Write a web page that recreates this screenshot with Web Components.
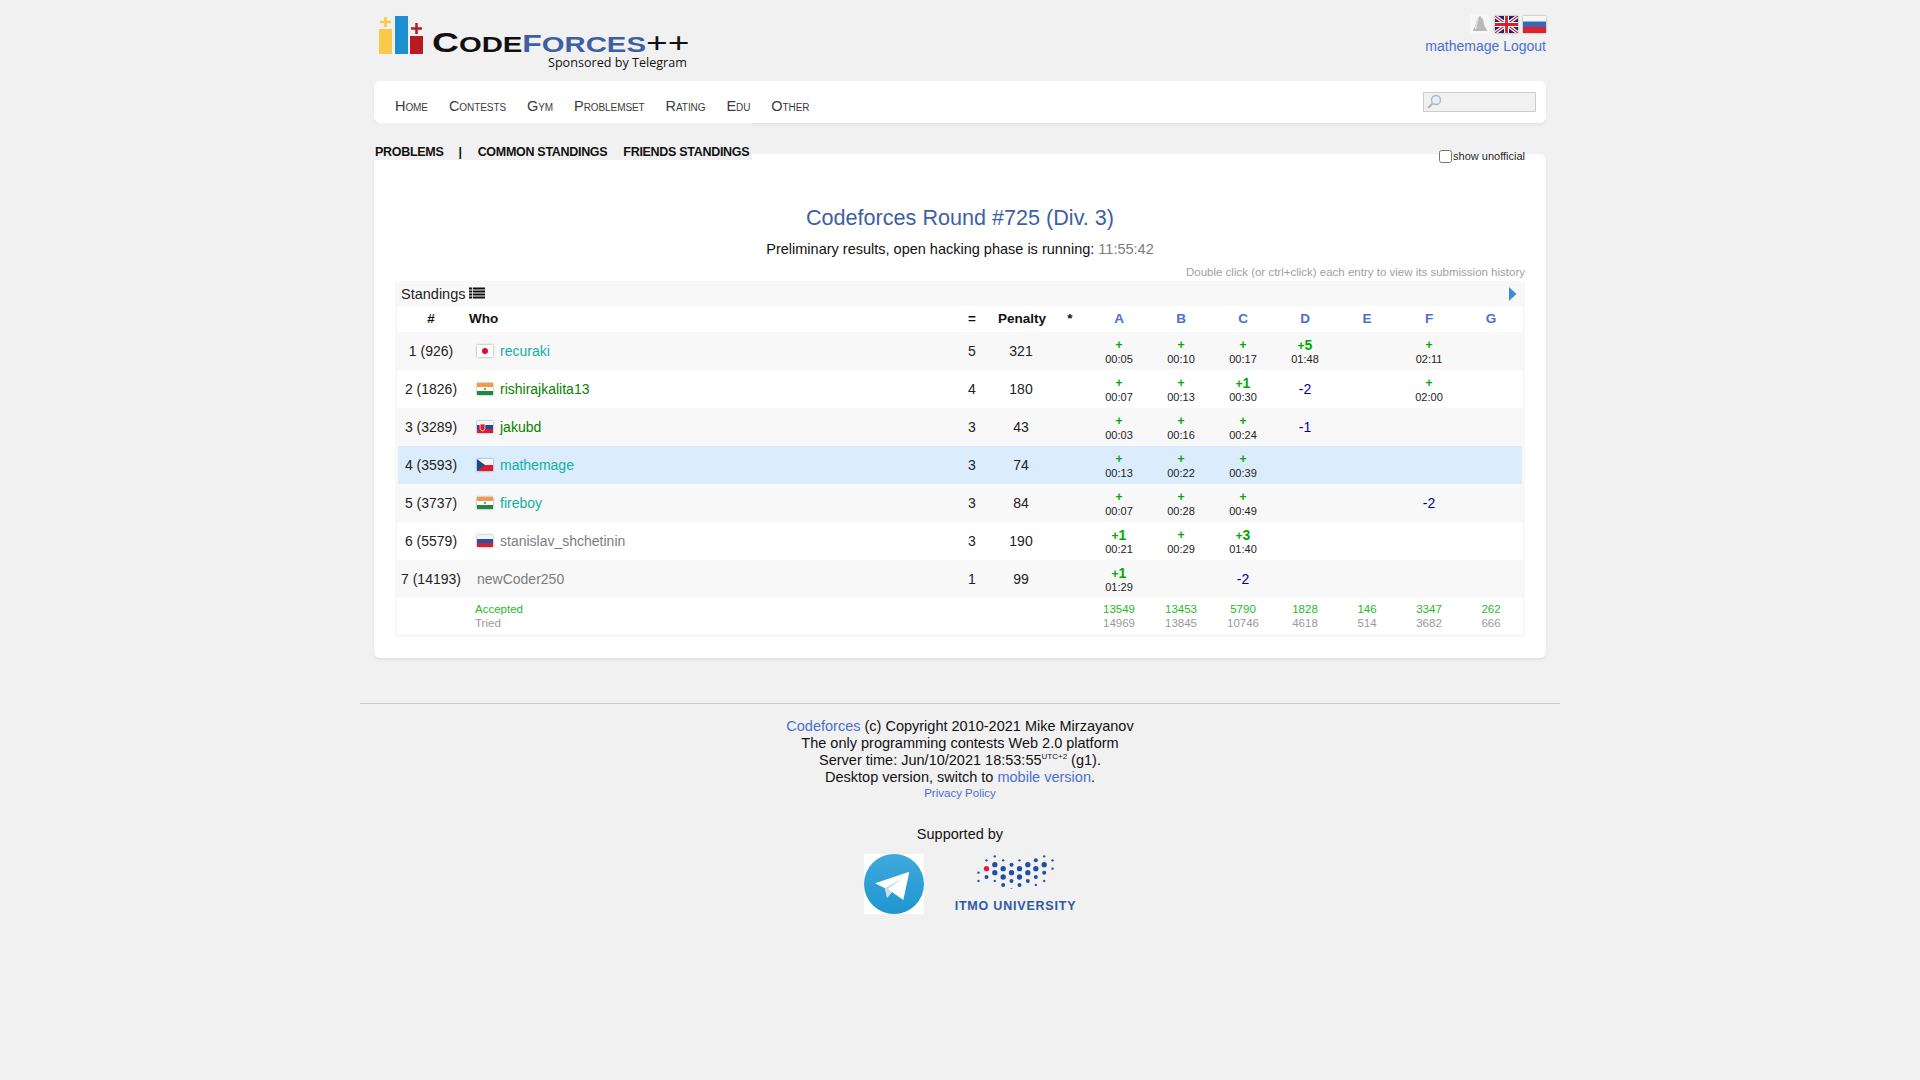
<!DOCTYPE html>
<html>
<head>
<meta charset="utf-8">
<title>Codeforces Round #725 (Div. 3) - Standings</title>
<style>
  html, body { margin: 0; padding: 0; background: #f1f1f1; }
  body { font-family: "Liberation Sans", Arial, sans-serif; font-size: 14px; color: #111; }
</style>
</head>
<body>
<cf-page>
  <cf-header slot="header"></cf-header>
  <cf-nav slot="nav"></cf-nav>
  <cf-tabs slot="tabs"></cf-tabs>
  <cf-standings slot="main"></cf-standings>
  <cf-footer slot="footer"></cf-footer>
</cf-page>

<script>
const LINK = '#4a6fd4'
const COLUMNS = '66px 482px 52px 46px 44px repeat(7, 62px)'

const FLAGS = {
  jp: '<rect width="16" height="12" fill="#fff"/><circle cx="8" cy="6" r="3" fill="#d8102c"/>',
  in: '<rect width="16" height="4" fill="#f59a45"/><rect y="4" width="16" height="4" fill="#fff"/><rect y="8" width="16" height="4" fill="#1f8a3b"/><circle cx="8" cy="6" r="1.3" fill="#8b93c8"/>',
  sk: '<rect width="16" height="4" fill="#f4f4f4"/><rect y="4" width="16" height="4" fill="#1f46a0"/><rect y="8" width="16" height="4" fill="#d81f2c"/><path d="M3 3h5v4.5q-.4 2-2.500 2.500q-2-.5-2.500-2.500z" fill="#d81f2c" stroke="#fff" stroke-width=".7"/>',
  cz: '<rect width="16" height="6" fill="#f4f4f4"/><rect y="6" width="16" height="6" fill="#d8202c"/><path d="M0 0L8 6L0 12z" fill="#1c4a8c"/>',
  ru: '<rect width="16" height="4" fill="#f4f4f4"/><rect y="4" width="16" height="4" fill="#2a50a8"/><rect y="8" width="16" height="4" fill="#d81f2c"/>'
}

customElements.define('cf-flag', class extends HTMLElement {
  connectedCallback() {
    const code = this.getAttribute('code')
    this.attachShadow({ mode: 'open' }).innerHTML = `
      <style>
        :host { display: inline-flex; width: 16px; height: 12px; box-shadow: 0 0 2px rgba(0,0,0,.45); }
        svg { display: block; }
      </style>
      <svg width="16" height="12" viewBox="0 0 16 12">${FLAGS[code]}</svg>`
  }
})

customElements.define('cf-page', class extends HTMLElement {
  constructor() {
    super()
    this.attachShadow({ mode: 'open' }).innerHTML = `
      <style>
        :host { display: block; width: 1200px; margin: 0 auto; }
        .inner { padding: 0 14px; }
      </style>
      <div class="inner">
        <slot name="header"></slot>
        <slot name="nav"></slot>
        <slot name="tabs"></slot>
        <slot name="main"></slot>
      </div>
      <slot name="footer"></slot>`
  }
})

customElements.define('cf-header', class extends HTMLElement {
  constructor() {
    super()
    this.attachShadow({ mode: 'open' }).innerHTML = `
      <style>
        :host { display: flex; justify-content: space-between; height: 81px; }
        .logo { padding: 16px 0 0 4px; display: flex; align-items: flex-start; }
        .logo > svg { display: block; }
        .word { margin: 13px 0 0 9px; width: 256px; color: #111; font: bold 28px/28px "Liberation Sans", sans-serif; white-space: nowrap; }
        .word .stretch { display: inline-block; transform: scaleX(1.33); transform-origin: left; }
        .word small { font-size: 22px; }
        .word b { color: #3f5fa5; }
        .word b.f { font-size: 24px; }
        .word i { font-style: normal; font-weight: normal; }
        .sponsor { margin: -4px 0 0 125px; font: 12.600px/16px "Open Sans", sans-serif; color: #111; white-space: nowrap; }
        .right { display: flex; flex-direction: column; align-items: flex-end; padding-top: 14px; }
        .icons { display: flex; align-items: center; gap: 5px; height: 20px; }
        .icons svg { display: block; }
        .bell { background: #f6f6f6; }
        .uk, .ru { box-shadow: 0 0 2px rgba(0,0,0,.4); }
        .user { margin-top: 4px; font: 14px/17px "Liberation Sans", sans-serif; color: ${LINK}; }
      </style>
      <div class="logo">
        <svg width="45" height="38" viewBox="0 0 45 38">
          <rect x="1" y="13" width="13" height="25" fill="#fcc84a"/>
          <rect x="17" y="0" width="13" height="38" fill="#1b8fd0"/>
          <rect x="32" y="20" width="13" height="18" fill="#b81c22"/>
          <path d="M7.500 1v10M2 6h11" stroke="#fcc84a" stroke-width="2.500"/>
          <path d="M38.500 7v11M33 12.500h11" stroke="#b81c22" stroke-width="2.500"/>
        </svg>
        <div>
          <div class="word"><span class="stretch">C<small>ODE</small><b class="f">F</b><b><small>ORCES</small></b><i>++</i></span></div>
          <div class="sponsor">Sponsored by Telegram</div>
        </div>
      </div>
      <div class="right">
        <div class="icons">
          <svg class="bell" width="20" height="20" viewBox="0 0 20 20">
            <path d="M10 2q1.200 0 1.200 1.500q2.300 1 2.500 5q.3 4 3.300 7.500v1H3v-1q3-3.500 3.300-7.500q.2-4 2.500-5Q8.800 2 10 2z" fill="#b9b9b9"/>
            <path d="M8 4q-1 4-2.500 11" stroke="#e2e2e2" stroke-width="1.500" fill="none"/>
          </svg>
          <svg class="uk" width="23" height="17" viewBox="0 0 23 17">
            <rect width="23" height="17" fill="#20246e"/>
            <path d="M0 0L23 17M23 0L0 17" stroke="#fff" stroke-width="3.500"/>
            <path d="M0 0L23 17M23 0L0 17" stroke="#d8202c" stroke-width="1.200"/>
            <path d="M11.500 0v17M0 8.500h23" stroke="#fff" stroke-width="5"/>
            <path d="M11.500 0v17M0 8.500h23" stroke="#d8202c" stroke-width="2.800"/>
          </svg>
          <svg class="ru" width="23" height="17" viewBox="0 0 23 17">
            <rect width="23" height="6" fill="#f6f6f6"/>
            <rect y="5.500" width="23" height="6" fill="#3568b8"/>
            <rect y="11" width="23" height="6" fill="#e0202a"/>
          </svg>
        </div>
        <div class="user">mathemage Logout</div>
      </div>`
  }
})

customElements.define('cf-nav', class extends HTMLElement {
  constructor() {
    super()
    const items = ['Home', 'Contests', 'Gym', 'Problemset', 'Rating', 'Edu', 'Other']
    this.attachShadow({ mode: 'open' }).innerHTML = `
      <style>
        :host { display: flex; align-items: center; justify-content: space-between; height: 42px; box-sizing: border-box;
          background: #fff; border-radius: 6px; box-shadow: 0 2px 3px rgba(0,0,0,.06); padding: 0 10px 0 21px; }
        nav { display: flex; gap: 21px; padding-top: 9px; font: 14.500px/17px "Liberation Sans", sans-serif; font-variant: small-caps; letter-spacing: -.08px; color: #3b3b3b; }
        .search { box-sizing: border-box; width: 113px; height: 20px; background: #f1f1f1; border: 1px solid #ccc; padding-left: 2px; }
        .search svg { display: block; margin-top: 1px; }
      </style>
      <nav>${items.map(i => `<span>${i}</span>`).join('')}</nav>
      <div class="search">
        <svg width="16" height="16" viewBox="0 0 16 16">
          <circle cx="10" cy="6" r="4.500" fill="#dff0fa" stroke="#b4b4b4" stroke-width="1.300"/>
          <path d="M6.500 9.500L2 14" stroke="#b4b4b4" stroke-width="2"/>
        </svg>
      </div>`
  }
})

customElements.define('cf-tabs', class extends HTMLElement {
  constructor() {
    super()
    this.attachShadow({ mode: 'open' }).innerHTML = `
      <style>
        :host { display: flex; justify-content: space-between; align-items: flex-start; height: 37px; margin-bottom: -6px; position: relative; }
        .tabs { display: flex; background: #f1f1f1; height: 37px; box-sizing: border-box; padding: 21px 1px 0 1px; font: bold 12.500px/16px "Liberation Sans", sans-serif; letter-spacing: -.3px; color: #111; width: 378px; white-space: nowrap; }
        .sep { margin: 0 16px 0 15px; font-weight: bold; }
        .fr { margin-left: 16px; }
        .unofficial { display: flex; align-items: center; padding: 26px 21px 0 0; font: 11px/14px "Liberation Sans", sans-serif; color: #222; }
        input { width: 13px; height: 13px; margin: 0 1px 0 0; }
      </style>
      <div class="tabs"><span>PROBLEMS</span><span class="sep">|</span><span>COMMON STANDINGS</span><span class="fr">FRIENDS STANDINGS</span></div>
      <label class="unofficial"><input type="checkbox">show unofficial</label>`
  }
})

customElements.define('cf-row', class extends HTMLElement {
  connectedCallback() {
    const [rank, flag, name, color, solved, penalty, ...cells] = JSON.parse(this.getAttribute('data'))
    const cellHtml = cells.map(c => {
      if (!c) return '<div class="p"></div>'
      if (c[0] === '-') return `<div class="p"><span class="neg">${c}</span></div>`
      const [mark, time] = c.split(' ')
      const extra = mark.slice(1)
      return `<div class="p ok"><div class="mark">+${extra ? `<big>${extra}</big>` : ''}</div><div class="time">${time}</div></div>`
    }).join('')
    this.attachShadow({ mode: 'open' }).innerHTML = `
      <style>
        :host { display: grid; grid-template-columns: ${COLUMNS}; height: 38px; align-items: center;
          background: var(--row, #f8f8f8); font: 14px/17px "Liberation Sans", sans-serif; color: #222; }
        :host([even]) { --row: #fff; }
        :host([me]) { --row: #dbecfd; }
        .c { text-align: center; }
        .who { display: flex; align-items: center; padding-left: 13px; font-size: 14px; }
        cf-flag { margin-right: 7px; }
        .p { text-align: center; }
        .ok { padding-top: 2px; }
        .neg { color: #0000a0; font-size: 14px; }
        .mark { font: bold 12px/14px "Liberation Sans", sans-serif; color: #0a0; height: 14px; }
        .mark big { font-size: 14px; font-weight: bold; }
        .time { font-size: 11px; line-height: 14px; color: #222; }
      </style>
      <div class="c">${rank}</div>
      <div class="who">${flag ? `<cf-flag code="${flag}"></cf-flag>` : ''}<span style="color:${color}">${name}</span></div>
      <div class="c">${solved}</div>
      <div class="c">${penalty}</div>
      <div></div>
      ${cellHtml}`
  }
})

customElements.define('cf-standings', class extends HTMLElement {
  constructor() {
    super()
    const T = '#0fb0a4', G = '#0a8000', N = '#7d7d7d'
    const rows = [
      ['1 (926)', 'jp', 'recuraki', T, 5, 321, '+ 00:05', '+ 00:10', '+ 00:17', '+5 01:48', '', '+ 02:11', ''],
      ['2 (1826)', 'in', 'rishirajkalita13', G, 4, 180, '+ 00:07', '+ 00:13', '+1 00:30', '-2', '', '+ 02:00', ''],
      ['3 (3289)', 'sk', 'jakubd', G, 3, 43, '+ 00:03', '+ 00:16', '+ 00:24', '-1', '', '', ''],
      ['4 (3593)', 'cz', 'mathemage', T, 3, 74, '+ 00:13', '+ 00:22', '+ 00:39', '', '', '', ''],
      ['5 (3737)', 'in', 'fireboy', T, 3, 84, '+ 00:07', '+ 00:28', '+ 00:49', '', '', '-2', ''],
      ['6 (5579)', 'ru', 'stanislav_shchetinin', N, 3, 190, '+1 00:21', '+ 00:29', '+3 01:40', '', '', '', ''],
      ['7 (14193)', '', 'newCoder250', N, 1, 99, '+1 01:29', '', '-2', '', '', '', '']
    ]
    const rowHtml = rows.map((r, i) => {
      const attrs = (i % 2 ? ' even' : '') + (i === 3 ? ' me' : '')
      return `<cf-row${attrs} data='${JSON.stringify(r)}'></cf-row>`
    }).join('')
    const heads = ['A', 'B', 'C', 'D', 'E', 'F', 'G'].map(h => `<div class="prob">${h}</div>`).join('')
    const acc = [13549, 13453, 5790, 1828, 146, 3347, 262]
    const tried = [14969, 13845, 10746, 4618, 514, 3682, 666]
    const stats = acc.map((a, i) => `<div class="stat"><div class="a">${a}</div><div class="t">${tried[i]}</div></div>`).join('')
    this.attachShadow({ mode: 'open' }).innerHTML = `
      <style>
        :host { display: block; background: #fff; border-radius: 6px; box-shadow: 0 2px 3px rgba(0,0,0,.06); padding: 51px 21px 21px; }
        h1 { margin: 0; text-align: center; font: 21.600px/26px "Liberation Sans", sans-serif; color: #3f5fa5; }
        .status { text-align: center; font: 14.500px/18px "Liberation Sans", sans-serif; color: #111; margin-top: 9px; }
        .status span { color: #7d7d7d; }
        .note { text-align: right; font: 11.500px/14px "Liberation Sans", sans-serif; color: #a0a0a0; margin-top: 7px; }
        .box { background: #f8f8f8; margin-top: 2px; padding: 0 3px 3px; }
        .bar { display: flex; align-items: center; justify-content: space-between; height: 25px; padding: 0 5px 0 3px; font: 14.500px/18px "Liberation Sans", sans-serif; color: #222; }
        .bar .l { display: flex; align-items: center; gap: 3px; }
        .head, .foot { display: grid; grid-template-columns: ${COLUMNS}; background: #fff; align-items: center; }
        .head { height: 26px; font: bold 13.500px/16px "Liberation Sans", sans-serif; color: #111; }
        .head > div { text-align: center; }
        .head .who { text-align: left; padding-left: 5px; }
        .head .prob { color: ${LINK}; }
        .head .star { padding-left: 8px; }
        .foot { height: 36px; font: 11.500px/14px "Liberation Sans", sans-serif; }
        .foot .label { padding-left: 11px; }
        .a { color: #1fbb1f; }
        .t { color: #9a9a9a; }
        .stat { text-align: center; }
      </style>
      <h1>Codeforces Round #725 (Div. 3)</h1>
      <div class="status">Preliminary results, open hacking phase is running: <span>11:55:42</span></div>
      <div class="note">Double click (or ctrl+click) each entry to view its submission history</div>
      <div class="box">
        <div class="bar">
          <div class="l">Standings
            <svg width="16" height="13" viewBox="0 0 16 13">
              <path d="M0 1.500h16M0 4.500h16M0 7.500h16M0 10.500h16" stroke="#111" stroke-width="2"/>
              <path d="M3.500 0v13" stroke="#f8f8f8" stroke-width=".8"/>
            </svg>
          </div>
          <svg width="8" height="14" viewBox="0 0 8 14"><path d="M0 0L7.500 7L0 14z" fill="#3a8fd6"/></svg>
        </div>
        <div class="head">
          <div>#</div><div class="who">Who</div><div>=</div><div>Penalty</div><div class="star">*</div>${heads}
        </div>
        ${rowHtml}
        <div class="foot">
          <div></div>
          <div class="label"><div class="a">Accepted</div><div class="t">Tried</div></div>
          <div></div><div></div><div></div>${stats}
        </div>
      </div>`
  }
})

customElements.define('cf-footer', class extends HTMLElement {
  constructor() {
    super()
    const big = [[436,68],[535,68],[584,68],[461,80],[510,80],[559,80],[436,92],[486,92],[535,92],[461,105],[510,105]]
    const mid = [[559,55],[486,68],[584,92],[411,105],[559,105],[486,117],[535,117],[461,129],[510,129]]
    const small = [[436,43],[584,43],[411,55],[461,55],[510,55],[609,55],[609,80],[387,92],[387,117],[436,117],[584,117],[559,129],[486,142]]
    const dots = (list, r) => list.map(([x, y]) => `<circle cx="${x}" cy="${y}" r="${r}"/>`).join('')
    this.attachShadow({ mode: 'open' }).innerHTML = `
      <style>
        :host { display: block; margin-top: 45px; border-top: 1px solid #ccc; padding-top: 14px; text-align: center; font: 14.500px/17px "Liberation Sans", sans-serif; color: #111; }
        a { color: ${LINK}; text-decoration: none; }
        sup { font-size: 8px; line-height: 0; }
        .privacy { font-size: 11.500px; line-height: 15px; }
        .by { margin-top: 25px; }
        .logos { display: flex; justify-content: center; align-items: flex-start; margin-top: 11px; padding-left: 20px; gap: 31px; }
        .itmo { display: flex; flex-direction: column; align-items: center; }
        .itmo svg { display: block; }
        .itmo span { font: bold 12.500px/14px "Liberation Sans", sans-serif; letter-spacing: .8px; color: #2d5aa5; margin-top: 10px; white-space: nowrap; }
      </style>
      <div><a>Codeforces</a> (c) Copyright 2010-2021 Mike Mirzayanov</div>
      <div>The only programming contests Web 2.0 platform</div>
      <div>Server time: Jun/10/2021 18:53:55<sup>UTC+2</sup> (g1).</div>
      <div>Desktop version, switch to <a>mobile version</a>.</div>
      <div class="privacy"><a>Privacy Policy</a></div>
      <div class="by">Supported by</div>
      <div class="logos">
        <svg width="60" height="60" viewBox="0 0 180 180">
          <defs><linearGradient id="tg" x1="0" y1="0" x2="0" y2="1"><stop offset="0" stop-color="#3fa9dc"/><stop offset="1" stop-color="#1f96d0"/></linearGradient></defs>
          <rect width="180" height="180" fill="#fff"/>
          <circle cx="90" cy="90" r="90" fill="url(#tg)"/>
          <path d="M33 88L136 53L118 138L84 114L69 131L63 103z" fill="#fff"/>
          <path d="M63 103L69 131L84 114L72 105L120 70z" fill="#c8dcea"/>
        </svg>
        <div class="itmo">
          <svg width="79" height="35" viewBox="380 36 236 105">
            <g fill="#1f4fa5">${dots(big, 8)}${dots(mid, 6)}${dots(small, 3.5)}</g>
            <circle cx="411" cy="80" r="8" fill="#e8174a"/>
          </svg>
          <span>ITMO UNIVERSITY</span>
        </div>
      </div>`
  }
})
</script>
</body>
</html>
